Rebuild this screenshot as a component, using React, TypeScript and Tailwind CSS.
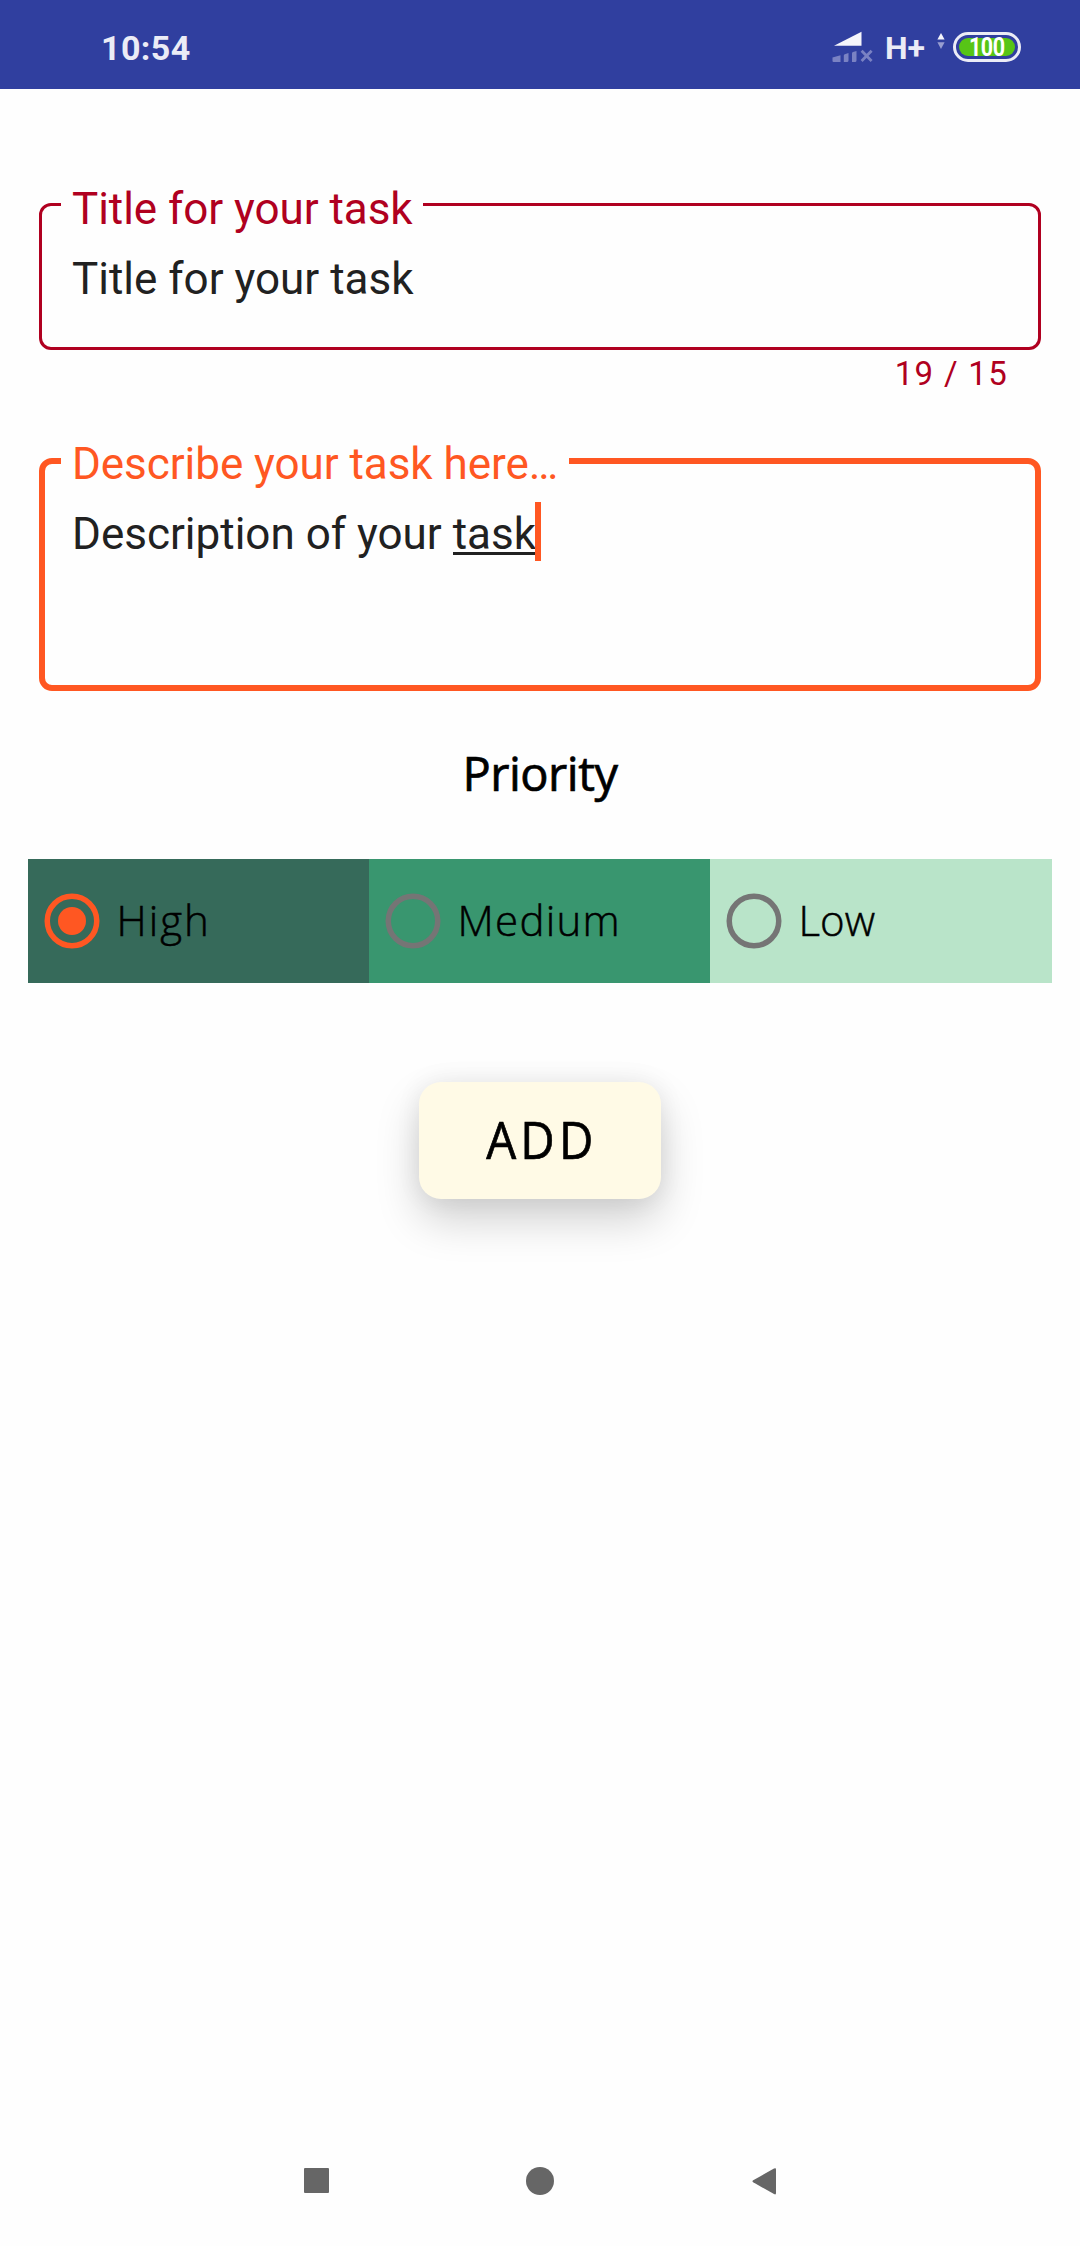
import React from "react";

function SignalIcon() {
  return (
    <svg width="42" height="32" viewBox="0 0 42 32" className="shrink-0">
      <path d="M2 14.8 29.5 .8V14.8z" fill="#f5f5fb" />
      <g fill="#7a82c3">
        <path d="M.5 26.5 8.5 24.3V31H1.5q-1 0-1-1z" />
        <path d="M11.8 24.5q0-1 1-1.3L16.5 22v7.5q0 1.5-1.5 1.5h-3.2z" />
        <path d="M20 22.3q0-1 1-1.2L24.5 20v9.5q0 1.5-1.5 1.5h-3z" />
      </g>
      <path d="M29.6 19.8 39.6 30M39.6 19.8 29.6 30" stroke="#7a82c3" strokeWidth="2.8" />
    </svg>
  );
}

function DataArrows() {
  return (
    <svg width="8" height="16" viewBox="0 0 8 16" className="shrink-0">
      <path d="M4 0 7.6 6.6H.4z" fill="#f5f5fb" />
      <path d="M4 16 7.6 9.2H.4z" fill="#989ed0" />
    </svg>
  );
}

function StatusBar() {
  return (
    <header className="flex h-[89px] justify-between bg-[#303f9f] text-[#ebecf6]">
      <span className="ml-[101px] mt-[28px] text-[34px] font-bold leading-[40px] tracking-[0.4px]">10:54</span>
      <div className="mr-[59px] flex">
        <div className="mt-[31px] w-[53px]">
          <SignalIcon />
        </div>
        <span className="mt-[28px] w-[52px] text-[32px] font-bold leading-[40px] tracking-[-0.2px]">H+</span>
        <div className="mt-[33px] w-[16px]">
          <DataArrows />
        </div>
        <div className="mt-[32px] flex h-[30px] w-[68px] rounded-full border-[3px] border-[#ebecf6] p-[3px]">
          <div className="flex flex-1 items-center justify-center rounded-full bg-[#57c516]">
            <span className="scale-x-[0.86] text-[25px] font-bold leading-none tracking-[-0.5px] text-white">100</span>
          </div>
        </div>
      </div>
    </header>
  );
}

function RadioIcon({ checked }: { checked: boolean }) {
  const color = checked ? "#ff5722" : "#757575";
  return (
    <svg width="56" height="56" viewBox="0 0 56 56" className="shrink-0">
      <circle cx="28" cy="28" r="24.75" fill="none" stroke={color} strokeWidth="5.5" />
      {checked && <circle cx="28" cy="28" r="14" fill={color} />}
    </svg>
  );
}

type PriorityProps = { label: string; checked?: boolean; className: string; textClassName: string };

function Priority({ label, checked = false, className, textClassName }: PriorityProps) {
  return (
    <label className={`flex items-center pl-4 ${className}`}>
      <RadioIcon checked={checked} />
      <span
        className={`ml-[16.5px] mt-[-2px] font-['Open_Sans',sans-serif] text-[42px] font-light leading-[56px] text-black [-webkit-text-stroke:0.5px_black] ${textClassName}`}
      >
        {label}
      </span>
    </label>
  );
}

export default function App() {
  return (
    <div className="flex h-[2246px] w-[1080px] flex-col bg-[#fefefe] font-[Roboto,sans-serif]">
      <StatusBar />
      <main className="flex flex-1 flex-col">
        <section className="relative mx-[39px] mt-[114px] h-[147px] rounded-[12px] border-[3px] border-[#b00020] pl-[30px] pt-[47px]">
          <span className="absolute left-[19px] top-[-23px] w-[362px] whitespace-nowrap bg-[#fefefe] pl-[11px] text-[44px] leading-[52px] tracking-[-0.05px] text-[#b00020]">
            Title for your task
          </span>
          <p className="text-[44px] leading-[52px] text-[#212121]">Title for your task</p>
        </section>
        <p className="mr-[72px] mt-[4px] text-right text-[33px] leading-[39px] tracking-[1.3px] text-[#b00020]">19 / 15</p>

        <section className="relative mx-[39px] mt-[65px] h-[233px] rounded-[13px] border-[6px] border-[#ff5722] pl-[27px] pt-[44px]">
          <span className="absolute left-[16px] top-[-26px] w-[508px] whitespace-nowrap bg-[#fefefe] pl-[11px] text-[44px] leading-[52px] tracking-[-0.05px] text-[#ff5722]">
            Describe your task here…
          </span>
          <p className="flex text-[44px] leading-[52px] text-[#212121]">
            <span className="whitespace-pre">Description of your </span>
            <span className="relative">
              task
              <i className="absolute left-0 top-[44px] h-[2.5px] w-full bg-[#212121]" />
              <i className="absolute right-[-5px] top-[-6px] h-[59px] w-[6px] bg-[#ff5722]" />
            </span>
          </p>
        </section>

        <h2 className="mt-[50px] text-center font-['Open_Sans',sans-serif] text-[47px] font-medium leading-[64px] tracking-[-0.5px] text-black [-webkit-text-stroke:0.7px_black]">
          Priority
        </h2>

        <div className="mx-[28px] mt-[54px] grid h-[124px] grid-cols-[341px_341px_342px]">
          <Priority label="High" checked className="bg-[#366a5a]" textClassName="tracking-[2px]" />
          <Priority label="Medium" className="bg-[#39966f]" textClassName="tracking-[1.3px]" />
          <Priority label="Low" className="bg-[#b9e4c9]" textClassName="tracking-normal" />
        </div>

        <button className="mt-[99px] flex h-[117px] w-[242px] items-center justify-center self-center rounded-[22px] bg-[#fffae6] pb-[4px] pl-[4px] font-['Open_Sans',sans-serif] text-[51px] leading-[60px] text-black shadow-[0_21px_44px_rgba(0,0,0,0.18),0_0_26px_rgba(0,0,0,0.07)]">
          <span className="scale-x-[0.93] tracking-[4.5px] [-webkit-text-stroke:0.7px_black]">ADD</span>
        </button>
      </main>
      <nav className="flex h-[130px] items-center justify-center">
        <svg width="472" height="28" viewBox="0 0 472 28" fill="#666" className="overflow-visible">
          <rect x="0" y="1" width="25" height="25" rx="1" />
          <circle cx="236" cy="14" r="14" />
          <path d="M449.200 13.300 470 1.500q2-1 2 .8v24q0 1.800-2 .8L449.200 15.300q-1.500-1 0-2z" />
        </svg>
      </nav>
    </div>
  );
}
